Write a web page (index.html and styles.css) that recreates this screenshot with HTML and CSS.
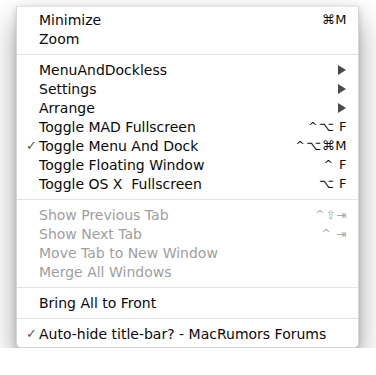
FILE: index.html
```html
<!DOCTYPE html>
<html>
<head>
<meta charset="utf-8">
<link rel="stylesheet" href="styles.css">
</head>
<body>
<div class="menu">
  <div class="item"><span class="check"></span><span class="label">Minimize</span><span class="key">⌘M</span></div>
  <div class="item"><span class="check"></span><span class="label">Zoom</span><span class="key"></span></div>
  <div class="sep"></div>
  <div class="item"><span class="check"></span><span class="label">MenuAndDockless</span><span class="key"><span class="arrow"></span></span></div>
  <div class="item"><span class="check"></span><span class="label">Settings</span><span class="key"><span class="arrow"></span></span></div>
  <div class="item"><span class="check"></span><span class="label">Arrange</span><span class="key"><span class="arrow"></span></span></div>
  <div class="item"><span class="check"></span><span class="label">Toggle MAD Fullscreen</span><span class="key"><span class="ctl">^</span>⌥ F</span></div>
  <div class="item"><span class="check">✓</span><span class="label">Toggle Menu And Dock</span><span class="key"><span class="ctl">^</span>⌥⌘M</span></div>
  <div class="item"><span class="check"></span><span class="label">Toggle Floating Window</span><span class="key"><span class="ctl">^</span> F</span></div>
  <div class="item"><span class="check"></span><span class="label">Toggle OS X&nbsp; Fullscreen</span><span class="key">⌥ F</span></div>
  <div class="sep"></div>
  <div class="item disabled"><span class="check"></span><span class="label">Show Previous Tab</span><span class="key"><span class="ctl">^</span>⇧⇥</span></div>
  <div class="item disabled"><span class="check"></span><span class="label">Show Next Tab</span><span class="key"><span class="ctl">^</span> ⇥</span></div>
  <div class="item disabled"><span class="check"></span><span class="label">Move Tab to New Window</span><span class="key"></span></div>
  <div class="item disabled"><span class="check"></span><span class="label">Merge All Windows</span><span class="key"></span></div>
  <div class="sep"></div>
  <div class="item"><span class="check"></span><span class="label">Bring All to Front</span><span class="key"></span></div>
  <div class="sep"></div>
  <div class="item"><span class="check">✓</span><span class="label">Auto-hide title-bar? - MacRumors Forums</span><span class="key"></span></div>
</div>
</body>
</html>
```
FILE: styles.css
```css
html, body {
  margin: 0;
  padding: 0;
  background: #ffffff;
}
body {
  font-family: "DejaVu Sans", "Liberation Sans", sans-serif;
  font-size: 14px;
  color: #0a0a0a;
}
.menu {
  margin: 6px 0 0 16px;
  width: 341px;
  background: #ffffff;
  border: 1px solid #d6d6d6;
  border-top-color: #e4e4e4;
  border-radius: 0 0 5px 5px;
  padding: 3px 0 4px;
  box-shadow: 0 14px 30px rgba(0, 0, 0, 0.38), 0 2px 6px rgba(0, 0, 0, 0.16);
}
.item {
  display: grid;
  grid-template-columns: 22px 1fr auto;
  align-items: center;
  height: 19px;
  padding: 0 11px 0 0;
  white-space: nowrap;
}
.check {
  text-align: right;
  padding-right: 2px;
  color: #555;
  font-size: 13px;
}
.key {
  text-align: right;
  font-size: 13px;
  letter-spacing: 0.5px;
}
.ctl {
  font-size: 11px;
  position: relative;
  top: -1px;
  margin-right: 1px;
}
.arrow {
  display: inline-block;
  width: 0;
  height: 0;
  border-top: 5px solid transparent;
  border-bottom: 5px solid transparent;
  border-left: 8px solid #4a4a4a;
  vertical-align: -1px;
  margin-right: 1px;
}
.disabled {
  color: #9e9e9e;
}
.disabled .key {
  color: #a8a8a8;
  font-size: 12px;
}
.sep {
  height: 12px;
  display: flex;
  align-items: center;
}
.sep::before {
  content: "";
  display: block;
  width: 100%;
  height: 1px;
  background: #e3e3e3;
}
```
